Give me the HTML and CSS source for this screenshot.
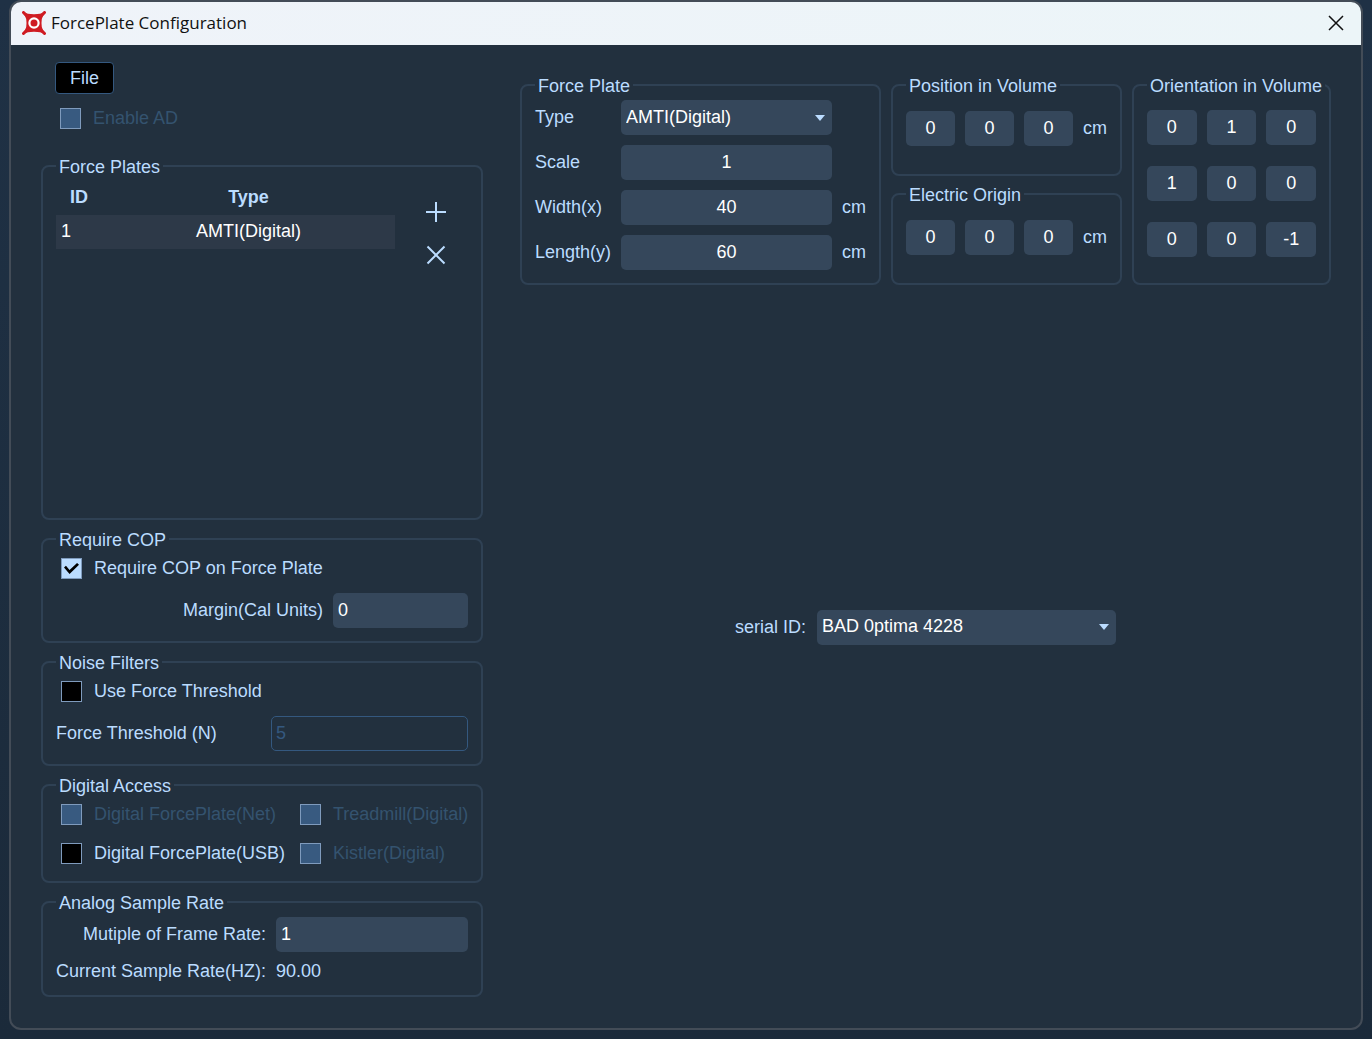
FILE: index.html
```html
<!DOCTYPE html>
<html lang="en">
<head>
  <meta charset="UTF-8">
  <meta name="viewport" content="width=device-width, initial-scale=1.0">
  <title>ForcePlate Configuration</title>
  <link rel="stylesheet" href="styles.css">
</head>
<body>

<div class="window">

  <!-- Title bar -->
  <header class="titlebar">
    <svg class="logo" viewBox="0 0 24 24" aria-hidden="true">
      <path d="M1.500 1.500L6 6M22.500 1.500L18 6M1.500 22.500L6 18M22.500 22.500L18 18" fill="none" stroke="#cf1b22" stroke-width="3" stroke-linecap="round"/>
      <path d="M2 1Q5 3.200 12 3.200Q19 3.200 22 1L23 2Q20.300 5.500 19.800 8Q19.200 12 19.800 16Q20.300 18.500 23 22L22 23Q19 20.800 12 20.800Q5 20.800 2 23L1 22Q3.700 18.500 4.200 16Q4.800 12 4.200 8Q3.700 5.500 1 2Z" fill="#cf1b22"/>
      <circle cx="12" cy="12" r="4.600" fill="none" stroke="#fff" stroke-width="2.200"/>
    </svg>
    <h1 class="title">ForcePlate Configuration</h1>
    <button type="button" class="close" aria-label="Close">
      <svg viewBox="0 0 16 16" width="16" height="16"><path d="M1 1L15 15M15 1L1 15" fill="none" stroke="#111" stroke-width="1.5"/></svg>
    </button>
  </header>

  <main class="content">

    <!-- Left column -->
    <div class="sidebar">
      <button type="button" class="file-button">File</button>
      <label class="check enable-ad disabled"><input type="checkbox" disabled> Enable AD</label>

      <div class="groups">
        <fieldset class="group plates">
          <legend>Force Plates</legend>
          <div class="plates-body">
            <table class="plates-table">
              <thead>
                <tr><th class="col-id">ID</th><th>Type</th></tr>
              </thead>
              <tbody>
                <tr><td class="col-id">1</td><td>AMTI(Digital)</td></tr>
              </tbody>
            </table>
            <div class="plates-actions">
              <button type="button" class="icon-button" aria-label="Add">
                <svg viewBox="0 0 20 20" width="20" height="20"><path d="M10 0V20M0 10H20" fill="none" stroke="#bbdcff" stroke-width="2"/></svg>
              </button>
              <button type="button" class="icon-button" aria-label="Remove">
                <svg viewBox="0 0 20 20" width="20" height="20"><path d="M1.500 1.500L18.500 18.500M18.500 1.500L1.500 18.500" fill="none" stroke="#bbdcff" stroke-width="2"/></svg>
              </button>
            </div>
          </div>
        </fieldset>

        <fieldset class="group">
          <legend>Require COP</legend>
          <div class="stack">
            <label class="check"><input type="checkbox" checked> Require COP on Force Plate</label>
            <div class="field margin-field">
              <label for="margin">Margin(Cal Units)</label>
              <input type="text" id="margin" value="0">
            </div>
          </div>
        </fieldset>

        <fieldset class="group">
          <legend>Noise Filters</legend>
          <div class="stack">
            <label class="check"><input type="checkbox"> Use Force Threshold</label>
            <div class="field threshold-field">
              <label for="threshold">Force Threshold (N)</label>
              <input type="text" id="threshold" value="5" disabled>
            </div>
          </div>
        </fieldset>

        <fieldset class="group">
          <legend>Digital Access</legend>
          <div class="access">
            <label class="check disabled"><input type="checkbox" disabled> Digital ForcePlate(Net)</label>
            <label class="check disabled"><input type="checkbox" disabled> Treadmill(Digital)</label>
            <label class="check"><input type="checkbox"> Digital ForcePlate(USB)</label>
            <label class="check disabled"><input type="checkbox" disabled> Kistler(Digital)</label>
          </div>
        </fieldset>

        <fieldset class="group">
          <legend>Analog Sample Rate</legend>
          <div class="rate">
            <label for="multiple">Mutiple of Frame Rate:</label>
            <input type="text" id="multiple" value="1">
            <span>Current Sample Rate(HZ):</span>
            <span class="rate-value">90.00</span>
          </div>
        </fieldset>
      </div>
    </div>

    <!-- Right column -->
    <div class="details">
      <div class="detail-groups">
        <fieldset class="group">
          <legend>Force Plate</legend>
          <div class="plate-form">
            <label for="type">Type</label>
            <div class="select">
              <select id="type"><option>AMTI(Digital)</option></select>
              <svg viewBox="0 0 10 6" width="10" height="6"><path d="M0 0H10L5 6Z" fill="#bbdcff"/></svg>
            </div>
            <span></span>
            <label for="scale">Scale</label>
            <input type="text" id="scale" value="1">
            <span></span>
            <label for="width">Width(x)</label>
            <input type="text" id="width" value="40">
            <span>cm</span>
            <label for="length">Length(y)</label>
            <input type="text" id="length" value="60">
            <span>cm</span>
          </div>
        </fieldset>

        <div class="vectors">
          <fieldset class="group">
            <legend>Position in Volume</legend>
            <div class="vector">
              <input type="text" value="0" aria-label="Position x">
              <input type="text" value="0" aria-label="Position y">
              <input type="text" value="0" aria-label="Position z">
              <span>cm</span>
            </div>
          </fieldset>
          <fieldset class="group">
            <legend>Electric Origin</legend>
            <div class="vector">
              <input type="text" value="0" aria-label="Origin x">
              <input type="text" value="0" aria-label="Origin y">
              <input type="text" value="0" aria-label="Origin z">
              <span>cm</span>
            </div>
          </fieldset>
        </div>

        <fieldset class="group">
          <legend>Orientation in Volume</legend>
          <div class="matrix">
            <input type="text" value="0" aria-label="Row 1 column 1">
            <input type="text" value="1" aria-label="Row 1 column 2">
            <input type="text" value="0" aria-label="Row 1 column 3">
            <input type="text" value="1" aria-label="Row 2 column 1">
            <input type="text" value="0" aria-label="Row 2 column 2">
            <input type="text" value="0" aria-label="Row 2 column 3">
            <input type="text" value="0" aria-label="Row 3 column 1">
            <input type="text" value="0" aria-label="Row 3 column 2">
            <input type="text" value="-1" aria-label="Row 3 column 3">
          </div>
        </fieldset>
      </div>

      <div class="serial">
        <label for="serial">serial ID:</label>
        <div class="select serial-select">
          <select id="serial"><option>BAD 0ptima 4228</option></select>
          <svg viewBox="0 0 10 6" width="10" height="6"><path d="M0 0H10L5 6Z" fill="#bbdcff"/></svg>
        </div>
      </div>
    </div>

  </main>
</div>

</body>
</html>
```
FILE: styles.css
```css
* {
  box-sizing: border-box;
}

body {
  display: flex;
  min-height: 100vh;
  margin: 0;
  padding: 0 9px 9px;
  background: linear-gradient(#1f3145, #1b2a3a);
  font-family: "Liberation Sans", Arial, sans-serif;
  font-size: 18px;
  line-height: 21px;
  color: #bbdcff;
}

button,
input,
select {
  font: inherit;
  color: inherit;
}

.window {
  display: flex;
  flex-direction: column;
  flex: 1;
  min-width: 0;
  border: 2px solid #434c57;
  border-radius: 12px;
  background-color: #22303e;
  overflow: hidden;
}

/* Title bar */
.titlebar {
  display: flex;
  align-items: center;
  gap: 5px;
  height: 43px;
  padding: 0 17px 2px 11px;
  background: linear-gradient(90deg, #eff3f9, #ecf5f8);
  color: #111;
}

.logo {
  width: 24px;
  height: 24px;
}

.title {
  flex: 1;
  margin: 0;
  font-family: "Segoe UI", "Open Sans", sans-serif;
  font-size: 17px;
  font-weight: 400;
}

.close,
.icon-button {
  display: flex;
  padding: 0;
  border: 0;
  background: none;
}

/* Main layout */
.content {
  display: grid;
  grid-template-columns: 442px 1fr;
  gap: 37px;
  flex: 1;
  padding: 17px 30px 31px;
}

.sidebar {
  display: flex;
  flex-direction: column;
  align-items: flex-start;
}

.file-button {
  height: 32px;
  margin: 0 0 14px 14px;
  padding: 0 14px;
  border: 1px solid #34587f;
  border-radius: 4px;
  background-color: #000;
}

.groups {
  display: flex;
  flex-direction: column;
  flex: 1;
  gap: 9px;
  width: 100%;
  margin-top: 27px;
}

.group {
  min-width: 0;
  margin: 0;
  padding: 0 13px;
  border: 2px solid #2f4154;
  border-radius: 8px;
}

.group legend {
  width: max-content;
  height: 20px;
  padding: 0 3px;
  line-height: 22px;
  white-space: nowrap;
}

/* Inputs */
input[type="text"],
select {
  width: 100%;
  min-width: 0;
  height: 35px;
  margin: 0;
  padding: 0 5px 1px;
  border: 0;
  border-radius: 5px;
  background-color: #35475b;
  color: #fff;
}

input[type="text"]:disabled {
  border: 1px solid #34587f;
  background-color: transparent;
  color: #34587f;
}

.select {
  display: grid;
  align-items: center;
}

.select select,
.select svg {
  grid-area: 1 / 1;
}

.select select {
  appearance: none;
}

.select svg {
  justify-self: end;
  margin-right: 7px;
  pointer-events: none;
}

.check {
  display: flex;
  align-items: center;
  gap: 12px;
  height: 21px;
  padding-left: 5px;
  line-height: 23px;
  white-space: nowrap;
}

.check input {
  display: grid;
  place-items: center;
  flex: none;
  width: 21px;
  height: 21px;
  margin: 0;
  border: 1px solid #7f9bbd;
  background-color: #000;
  appearance: none;
}

.check input:checked {
  background-color: #bbdcff;
}

.check input:checked::before {
  content: "";
  width: 15px;
  height: 11px;
  background-color: #000;
  clip-path: polygon(0 40%, 13% 25%, 37% 64%, 87% 0, 100% 16%, 37% 100%);
}

.check input:disabled {
  background-color: #385a80;
}

.disabled {
  color: #34536f;
}

.enable-ad {
  margin-left: 14px;
}

/* Force plates list */
.plates {
  flex: 1;
}

.plates-body {
  display: flex;
  align-items: flex-start;
  justify-content: space-between;
  padding-top: 3px;
}

.plates-table {
  width: 339px;
  border-collapse: collapse;
}

.plates-table th {
  height: 36px;
  padding: 0;
}

.plates-table td {
  height: 34px;
  padding: 0 0 2px;
  background-color: #2d3948;
  color: #fff;
  text-align: center;
}

.plates-table .col-id {
  width: 46px;
}

.plates-table td.col-id {
  padding-left: 5px;
  text-align: left;
}

.plates-actions {
  display: flex;
  flex-direction: column;
  gap: 23px;
  padding: 23px 22px 0 0;
}

/* Left groups */
.stack {
  display: flex;
  flex-direction: column;
  gap: 14px;
  padding: 9px 0 13px;
}

.field {
  display: flex;
  align-items: center;
  gap: 10px;
}

.margin-field {
  justify-content: flex-end;
}

.margin-field input[type="text"] {
  width: 135px;
}

.threshold-field {
  justify-content: space-between;
}

.threshold-field input[type="text"] {
  width: 197px;
  padding-left: 4px;
}

.access {
  display: grid;
  grid-template-columns: 239px 1fr;
  row-gap: 18px;
  padding: 9px 0 17px;
}

.rate {
  display: grid;
  grid-template-columns: 210px 1fr;
  align-items: center;
  gap: 9px 10px;
  padding: 5px 0 13px;
  text-align: right;
  white-space: nowrap;
}

.rate-value {
  text-align: left;
}

/* Right column */
.details {
  display: flex;
  flex-direction: column;
  min-width: 0;
  padding-top: 13px;
}

.detail-groups {
  display: grid;
  grid-template-columns: 361fr 231fr 199fr;
  gap: 10px;
}

.plate-form {
  display: grid;
  grid-template-columns: 76px 1fr 24px;
  align-items: center;
  gap: 10px;
  padding: 5px 0 13px;
}

.plate-form input,
.vector input,
.matrix input {
  text-align: center;
}

.vectors {
  display: flex;
  flex-direction: column;
  gap: 8px;
}

.vector {
  display: grid;
  grid-template-columns: 1fr 1fr 1fr 24px;
  align-items: center;
  gap: 10px;
  padding: 16px 0 28px;
}

.matrix {
  display: grid;
  grid-template-columns: 1fr 1fr 1fr;
  gap: 21px 10px;
  padding: 15px 0 26px;
}

.serial {
  display: flex;
  align-items: center;
  justify-content: center;
  flex: 1;
  gap: 11px;
  padding-bottom: 28px;
}

.serial-select {
  width: 299px;
}
```
